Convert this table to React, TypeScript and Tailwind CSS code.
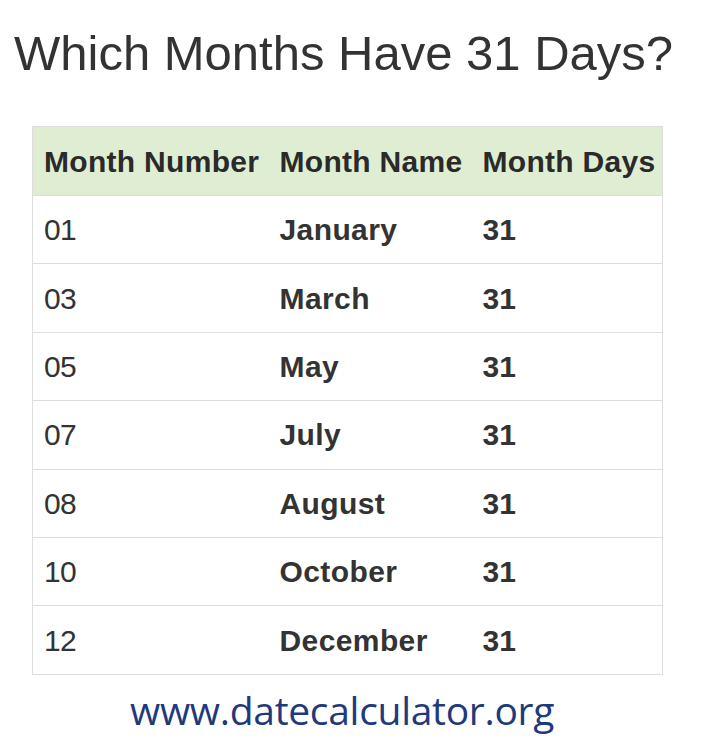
const rows = [
  ['01', 'January', '31'],
  ['03', 'March', '31'],
  ['05', 'May', '31'],
  ['07', 'July', '31'],
  ['08', 'August', '31'],
  ['10', 'October', '31'],
  ['12', 'December', '31'],
];

export default function App() {
  return (
    <div className="w-[720px] h-[746px] bg-white font-['Liberation_Sans',Arial,sans-serif] text-[#333]">
      <h1 className="pt-[26px] pl-[14px] text-[49px] leading-[54px] text-[#333]">
        Which Months Have 31 Days?
      </h1>

      <table className="mt-[46px] ml-[32px] w-[631px] border-collapse border border-[#ddd] table-fixed">
        <colgroup>
          <col className="w-[236px]" />
          <col className="w-[203px]" />
          <col />
        </colgroup>
        <thead>
          <tr className="h-[69px] bg-[#dfeed3]">
            <th className="pl-[11px] pr-0 text-left text-[30px] font-bold tracking-[0.3px] whitespace-nowrap text-[#2a2a2a]">Month Number</th>
            <th className="pl-[11px] pr-0 text-left text-[30px] font-bold tracking-[0.3px] whitespace-nowrap text-[#2a2a2a]">Month Name</th>
            <th className="pl-[11px] pr-0 text-left text-[30px] font-bold tracking-[0.3px] whitespace-nowrap text-[#2a2a2a]">Month Days</th>
          </tr>
        </thead>
        <tbody>
          {rows.map(([num, name, days]) => (
            <tr key={num} className="h-[68.4px] border-t border-[#ddd] text-[30px]">
              <td className="pl-[11px] tracking-[-0.8px]">{num}</td>
              <td className="pl-[11px] font-bold tracking-[0.4px]">{name}</td>
              <td className="pl-[11px] font-bold">{days}</td>
            </tr>
          ))}
        </tbody>
      </table>

      <p className="mt-[10px] pl-[130px] text-[39px] leading-[50px] text-[#1f3a7c] font-['Open_Sans',sans-serif] tracking-[-0.3px]">
        www.datecalculator.org
      </p>
    </div>
  );
}
